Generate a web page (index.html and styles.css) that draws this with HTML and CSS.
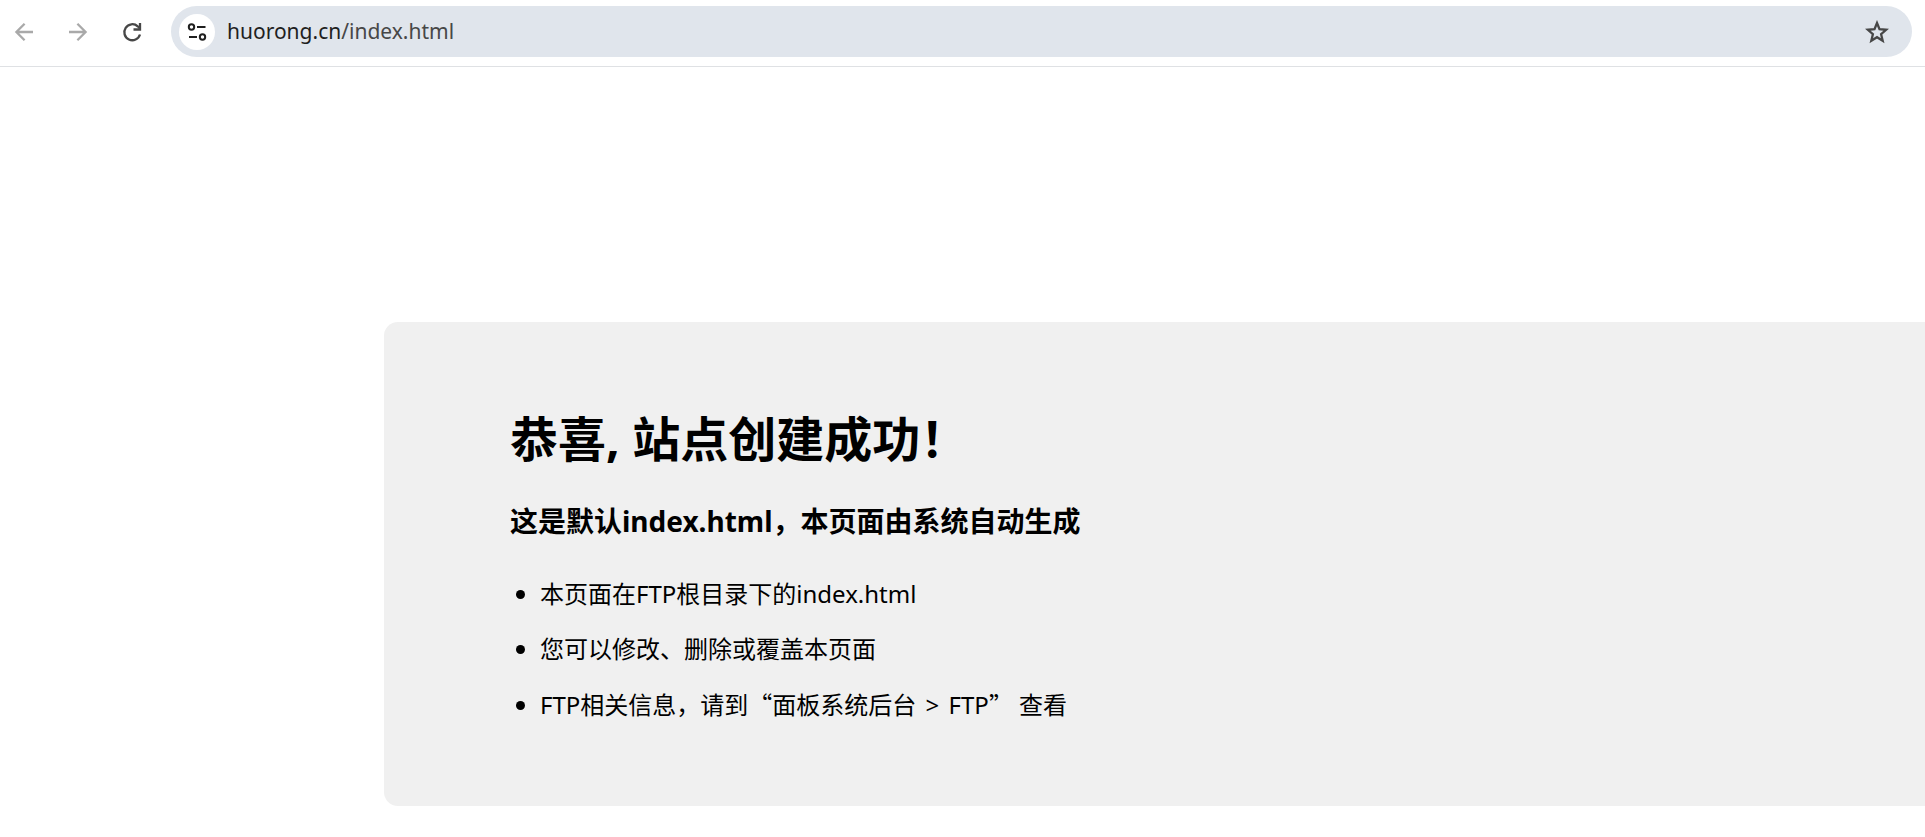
FILE: index.html
```html
<!DOCTYPE html>
<html lang="zh-CN">
<head>
<meta charset="utf-8">
<title>恭喜,站点创建成功!</title>
<link rel="stylesheet" href="styles.css">
</head>
<body>
<header class="toolbar">
  <nav class="nav">
    <button class="nav-btn" type="button" aria-label="后退" disabled>
      <svg width="24" height="24" viewBox="0 0 24 24" fill="none" stroke="currentColor" stroke-width="2.300"><path d="M21 12H4M12.600 3.800 4.400 12l8.200 8.200"/></svg>
    </button>
    <button class="nav-btn" type="button" aria-label="前进" disabled>
      <svg width="24" height="24" viewBox="0 0 24 24" fill="none" stroke="currentColor" stroke-width="2.300"><path d="M3 12h17M11.400 3.800l8.200 8.200-8.200 8.200"/></svg>
    </button>
    <button class="nav-btn nav-btn-active" type="button" aria-label="刷新">
      <svg width="24" height="24" viewBox="0 0 24 24" fill="none" stroke="currentColor" stroke-width="2.300"><path d="M20 14.500a8 8 0 1 1-2.300-8.200l2 2"/><path d="M20 3v6.500H13.500"/></svg>
    </button>
  </nav>
  <form class="address">
    <button class="site-info" type="button" aria-label="网站信息">
      <svg width="20" height="20" viewBox="0 0 20 20" fill="none" stroke="currentColor" stroke-width="2"><circle cx="4.500" cy="5" r="2.700"/><path d="M10 5h8.500M2 15h8"/><circle cx="15.500" cy="15" r="2.700"/></svg>
    </button>
    <a class="url" href="#">huorong.cn<span class="url-path">/index.html</span></a>
    <button class="star" type="button" aria-label="收藏">
      <svg width="24" height="24" viewBox="0 0 24 24" fill="none" stroke="currentColor" stroke-width="2.300"><path d="M12 3l2.500 6.200 6.700.550-5.100 4.400 1.600 6.550L12 17.200l-5.700 3.500 1.600-6.550L2.800 9.750l6.700-.550z"/></svg>
    </button>
  </form>
</header>
<main class="page">
  <section class="card">
    <h1 class="title">恭喜, 站点创建成功！</h1>
    <h3 class="subtitle">这是默认index.html，本页面由系统自动生成</h3>
    <ul class="notes">
      <li>本页面在FTP根目录下的index.html</li>
      <li>您可以修改、删除或覆盖本页面</li>
      <li>FTP相关信息，请到<span class="quote">“</span>面板系统后台 <span class="separator">&gt;</span> FTP<span class="quote">”</span> 查看</li>
    </ul>
  </section>
</main>
</body>
</html>
```
FILE: styles.css
```css
* {
  box-sizing: border-box;
}

body {
  margin: 0;
  background: #fff;
  color: #000;
  font-family: "Noto Sans", "Noto Sans CJK SC", sans-serif;
}

button {
  display: flex;
  align-items: center;
  justify-content: center;
  padding: 0;
  border: 0;
  background: none;
}

.toolbar {
  display: flex;
  align-items: center;
  gap: 27px;
  padding: 6px 13px 9px 12px;
  border-bottom: 1px solid #dfe1e4;
}

.nav {
  display: flex;
  gap: 30px;
}

.nav-btn {
  width: 24px;
  height: 24px;
  color: #a9a9a9;
}

.nav-btn-active {
  color: #474747;
}

.address {
  display: flex;
  flex: 1;
  align-items: center;
  height: 51px;
  padding: 0 23px 0 8px;
  border-radius: 26px;
  background: #e0e5ec;
}

.site-info {
  width: 36px;
  height: 36px;
  border-radius: 50%;
  background: #fff;
  color: #1f1f1f;
}

.url {
  flex: 1;
  margin-left: 12px;
  padding-bottom: 2px;
  color: #1f1f1f;
  font-size: 21px;
  line-height: 30px;
  text-decoration: none;
}

.url-path {
  color: #474747;
}

.star {
  color: #474747;
}

.page {
  padding: 255px 0 30px 384px;
}

.card {
  padding: 79px 126px 83px;
  border-radius: 14px 0 0 14px;
  background: #f0f0f0;
}

.title {
  margin: 0 0 24px;
  font-size: 48px;
  line-height: 76px;
}

.subtitle {
  margin: 0 0 35px;
  font-size: 28px;
  line-height: 40px;
}

.notes {
  display: grid;
  gap: 19px;
  margin: 0;
  padding-left: 30px;
  font-size: 24px;
  line-height: 36px;
}

.quote {
  font-family: "Noto Sans CJK SC", sans-serif;
}

.separator {
  margin: 0 3px;
}
```
